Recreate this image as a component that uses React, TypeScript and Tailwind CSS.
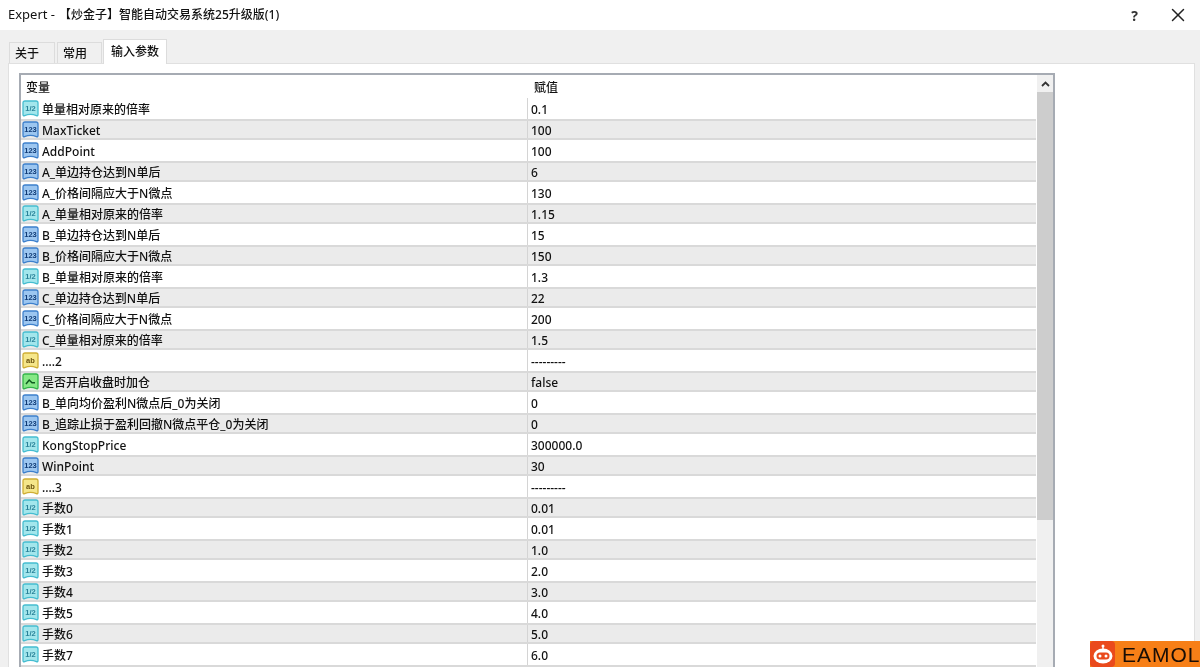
import React from 'react';
import { X } from 'lucide-react';

type Kind = 'real' | 'int' | 'str' | 'bool';

const rows: [Kind, string, string][] = [
  ['real', '单量相对原来的倍率', '0.1'],
  ['int', 'MaxTicket', '100'],
  ['int', 'AddPoint', '100'],
  ['int', 'A_单边持仓达到N单后', '6'],
  ['int', 'A_价格间隔应大于N微点', '130'],
  ['real', 'A_单量相对原来的倍率', '1.15'],
  ['int', 'B_单边持仓达到N单后', '15'],
  ['int', 'B_价格间隔应大于N微点', '150'],
  ['real', 'B_单量相对原来的倍率', '1.3'],
  ['int', 'C_单边持仓达到N单后', '22'],
  ['int', 'C_价格间隔应大于N微点', '200'],
  ['real', 'C_单量相对原来的倍率', '1.5'],
  ['str', '....2', '---------'],
  ['bool', '是否开启收盘时加仓', 'false'],
  ['int', 'B_单向均价盈利N微点后_0为关闭', '0'],
  ['int', 'B_追踪止损于盈利回撤N微点平仓_0为关闭', '0'],
  ['real', 'KongStopPrice', '300000.0'],
  ['int', 'WinPoint', '30'],
  ['str', '....3', '---------'],
  ['real', '手数0', '0.01'],
  ['real', '手数1', '0.01'],
  ['real', '手数2', '1.0'],
  ['real', '手数3', '2.0'],
  ['real', '手数4', '3.0'],
  ['real', '手数5', '4.0'],
  ['real', '手数6', '5.0'],
  ['real', '手数7', '6.0'],
];

const palette: Record<Kind, { fill: string; edge: string; ink: string; label: string }> = {
  real: { fill: '#a3e6ec', edge: '#45bdd0', ink: '#2a8299', label: '1/2' },
  int: { fill: '#9cc6f0', edge: '#3d80cc', ink: '#0f3a75', label: '123' },
  str: { fill: '#f5e68a', edge: '#cfae35', ink: '#6b5410', label: 'ab' },
  bool: { fill: '#86e886', edge: '#33b54a', ink: '#0f5a20', label: '' },
};

const TypeIcon = ({ kind }: { kind: Kind }) => {
  const c = palette[kind];
  return (
    <svg width="17" height="17" viewBox="0 0 17 17" className="shrink-0">
      <path
        d="M1 3 Q1 1 3 1 H14 Q16 1 16 3 V14.5 Q16 16.2 14.4 15.6 Q8.5 13 2.6 15.6 Q1 16.2 1 14.5 Z"
        fill={c.fill}
        stroke={c.edge}
        strokeWidth="1.3"
      />
      {kind === 'bool' ? (
        <path d="M4 11 L7.2 7 L10 9.8 H13" fill="none" stroke={c.ink} strokeWidth="1.5" />
      ) : (
        <text x="8.5" y="10.5" textAnchor="middle" fontSize="7.5" fontWeight="700" fill={c.ink} fontFamily="'Liberation Sans', sans-serif">
          {c.label}
        </text>
      )}
    </svg>
  );
};

const Logo = () => (
  <div className="absolute right-0 bottom-0 w-[110px] h-[26px] bg-[#f77f17] flex items-center overflow-hidden">
    <div className="w-[25px] h-[26px] bg-[#ea4a1c] rounded-[4px] flex items-center justify-center shrink-0">
      <svg width="22" height="22" viewBox="0 0 22 22">
        <circle cx="11" cy="3" r="1.5" fill="#fff" />
        <rect x="10.3" y="3" width="1.4" height="3" fill="#fff" />
        <ellipse cx="11" cy="13" rx="9.5" ry="7.5" fill="#fff" />
        <rect x="4.5" y="9.5" width="13" height="7" rx="3.5" fill="#ea4a1c" />
        <circle cx="8" cy="13" r="1.5" fill="#fff" />
        <circle cx="14" cy="13" r="1.5" fill="#fff" />
      </svg>
    </div>
    <span className="ml-[7px] text-[21px] leading-none tracking-[1px] text-[#1a0e05] font-['Liberation_Sans',sans-serif]">
      EAMOL
    </span>
  </div>
);

export default function App() {
  return (
    <div className="relative w-[1200px] h-[667px] overflow-hidden bg-[#f0f0f0] text-[12px] font-medium text-[#111] font-['Noto_Sans','Noto_Sans_CJK_SC',sans-serif] blur-[0.5px]">
      {/* Title bar */}
      <div className="h-[30px] bg-white flex items-center pl-[8px] pr-[11px]">
        <span className="text-[13px] font-normal mr-[3px]">Expert -</span>
        <span className="text-[12px] ml-[1px]">【炒金子】智能自动交易系统25升级版(1)</span>
        <span className="ml-auto mr-[29px] text-[14px] font-bold text-[#333]">?</span>
        <X size={22} strokeWidth={1.6} className="text-[#222]" />
      </div>

      {/* Tabs */}
      <div className="flex items-end h-[33px] pl-[9px] pt-[8px]">
        <div className="h-[21px] w-[46px] pl-[5px] pt-px flex items-center bg-[#f0f0f0] border border-b-0 border-[#dcdcdc]">关于</div>
        <div className="h-[21px] w-[45px] ml-[2px] pl-[5px] pt-px flex items-center bg-[#f0f0f0] border border-b-0 border-[#dcdcdc]">常用</div>
        <div className="relative h-[25px] w-[64px] ml-px pl-[7px] flex items-center bg-white border border-b-0 border-[#dcdcdc] -mb-px z-10">输入参数</div>
      </div>

      {/* Tab panel */}
      <div className="h-[620px] ml-[8px] mr-[5px] bg-white border border-[#e0e0e0] pl-[10px] pt-[9px]">
        {/* Parameter list */}
        <div className="relative w-[1036px] h-[620px] border-2 border-[#a6abb3] border-b-0 bg-white overflow-hidden">
          <div className="flex h-[23px] items-center pt-[2px]">
            <div className="w-[507px] pl-[5px]">变量</div>
            <div className="pl-[6px]">赋值</div>
          </div>
          <div className="w-[1015px]">
            {rows.map(([kind, name, value], i) => (
              <div
                key={i}
                className={
                  i % 2 === 1
                    ? 'flex h-[21px] items-center bg-[#ebebeb] border-y-2 border-[#d9d9d9]'
                    : 'flex h-[21px] items-center bg-white'
                }
              >
                <div className="w-[507px] h-full flex items-center gap-[3px] pl-[1px] border-r border-[#d4d4d4] shrink-0">
                  <TypeIcon kind={kind} />
                  <span className="whitespace-nowrap pt-[2px]">{name}</span>
                </div>
                <span className="pl-[3px] pt-[2px]">{value}</span>
              </div>
            ))}
            <div className="h-[21px] bg-[#ebebeb] border-y-2 border-[#d9d9d9]" />
          </div>

          {/* Scrollbar */}
          <div className="absolute top-0 right-0 w-[16px] h-full bg-[#f0f0f0] flex flex-col">
            <div className="h-[17px] flex items-center justify-center">
              <svg width="9" height="6" viewBox="0 0 9 6">
                <path d="M1 5 L4.5 1.5 L8 5" fill="none" stroke="#333" strokeWidth="1.8" />
              </svg>
            </div>
            <div className="h-[428px] bg-[#cdcdcd]" />
          </div>
        </div>
      </div>

      <Logo />
    </div>
  );
}
